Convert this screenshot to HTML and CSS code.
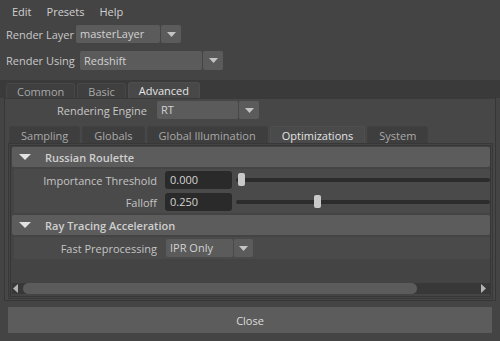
FILE: index.html
```html
<!DOCTYPE html>
<html>
<head>
<meta charset="utf-8">
<link rel="stylesheet" href="styles.css">
</head>
<body>
<div class="menubar">
  <span>Edit</span><span>Presets</span><span>Help</span>
</div>
<div class="toprow row1">
  <span class="toplabel lbl-layer">Render Layer</span>
  <div class="dropdown">
    <span class="dd-value dd-layer">masterLayer</span>
    <span class="dd-btn"><svg width="9" height="5" viewBox="0 0 9 5"><polygon points="0,0 9,0 4.5,5" fill="#c4c4c4"/></svg></span>
  </div>
</div>
<div class="toprow row2">
  <span class="toplabel lbl-using">Render Using</span>
  <div class="dropdown tall">
    <span class="dd-value dd-using">Redshift</span>
    <span class="dd-btn"><svg width="9" height="5" viewBox="0 0 9 5"><polygon points="0,0 9,0 4.5,5" fill="#c4c4c4"/></svg></span>
  </div>
</div>

<div class="tabstrip">
  <span class="tab">Common</span><span class="tab">Basic</span><span class="tab selected">Advanced</span>
</div>
<div class="panel">
  <div class="re-row">
    <span class="re-label">Rendering Engine</span>
    <div class="dropdown">
      <span class="dd-value dd-engine">RT</span>
      <span class="dd-btn"><svg width="9" height="5" viewBox="0 0 9 5"><polygon points="0,0 9,0 4.5,5" fill="#c4c4c4"/></svg></span>
    </div>
  </div>
  <div class="subtabs">
    <span class="subtab">Sampling</span><span class="subtab">Globals</span><span class="subtab">Global Illumination</span><span class="subtab selected">Optimizations</span><span class="subtab">System</span>
  </div>
  <div class="subpanel">
    <div class="scrollarea">
      <div class="frame-header first">
        <svg class="tri" width="12" height="6" viewBox="0 0 12 6"><polygon points="0,0 12,0 6,6" fill="#e2e2e2"/></svg>
        <span>Russian Roulette</span>
      </div>
      <div class="frame-body">
        <div class="attr-row">
          <span class="attr-label">Importance Threshold</span>
          <span class="field">0.000</span>
          <div class="slider"><div class="track"></div><div class="handle" style="left:2px"></div></div>
        </div>
        <div class="attr-row">
          <span class="attr-label">Falloff</span>
          <span class="field">0.250</span>
          <div class="slider"><div class="track"></div><div class="handle" style="left:78px"></div></div>
        </div>
      </div>
      <div class="frame-header">
        <svg class="tri" width="12" height="6" viewBox="0 0 12 6"><polygon points="0,0 12,0 6,6" fill="#e2e2e2"/></svg>
        <span>Ray Tracing Acceleration</span>
      </div>
      <div class="frame-body second">
        <div class="attr-row">
          <span class="attr-label">Fast Preprocessing</span>
          <div class="dropdown small">
            <span class="dd-value dd-ipr">IPR Only</span>
            <span class="dd-btn"><svg width="9" height="5" viewBox="0 0 9 5"><polygon points="0,0 9,0 4.5,5" fill="#c4c4c4"/></svg></span>
          </div>
        </div>
      </div>
      <div class="spacer"></div>
      <div class="hscroll">
        <svg class="arrow-l" width="5" height="9" viewBox="0 0 5 9"><polygon points="5,0 5,9 0,4.5" fill="#b4b4b4"/></svg>
        <div class="thumb"></div>
        <div class="hs-rest"></div>
        <svg class="arrow-r" width="5" height="9" viewBox="0 0 5 9"><polygon points="0,0 0,9 5,4.5" fill="#b4b4b4"/></svg>
      </div>
    </div>
  </div>
</div>
<div class="closebar">
  <button class="close">Close</button>
</div>
</body>
</html>
```

FILE: styles.css
```css
html, body {
  margin: 0;
  padding: 0;
}
body {
  width: 500px;
  height: 341px;
  overflow: hidden;
  background: #444444;
  font-family: "Open Sans", "DejaVu Sans", sans-serif;
  font-size: 11px;
  line-height: 15px;
  color: #c6c6c6;
}
.menubar {
  display: flex;
  gap: 15px;
  padding: 4px 0 0 12px;
  height: 15px;
  color: #d0d0d0;
}
.toprow {
  display: flex;
  align-items: center;
  padding-left: 6px;
}
.row1 { margin-top: 6px; height: 18px; }
.row2 { margin-top: 8px; height: 19px; }
.toplabel { color: #c8c8c8; }
.lbl-layer { width: 70px; }
.lbl-using { width: 74px; }

.dropdown {
  display: flex;
  gap: 1px;
  height: 18px;
}
.dropdown.tall { height: 19px; }
.dd-value {
  background: #5b5b5b;
  border-radius: 2px;
  padding-left: 4px;
  line-height: 18px;
  color: #d2d2d2;
  box-sizing: border-box;
}
.tall .dd-value { line-height: 19px; }
.dd-btn {
  width: 20px;
  background: #5b5b5b;
  border-radius: 2px;
  display: flex;
  align-items: center;
  justify-content: center;
}
.dd-layer { width: 84px; }
.dd-using { width: 122px; }
.dd-engine { width: 81px; }
.dd-ipr { width: 67px; }
.small .dd-btn { width: 19px; }

.tabstrip {
  margin-top: 10px;
  height: 15px;
  padding: 3px 0 0 6px;
  background: #3a3a3a;
  display: flex;
  gap: 2px;
}
.tab {
  height: 15px;
  padding: 0 10px;
  background: #3f3f3f;
  border: 1px solid #474747;
  border-bottom: none;
  border-radius: 3px 3px 0 0;
  box-sizing: border-box;
  line-height: 15px;
  color: #a9a9a9;
}
.tab.selected {
  background: #484848;
  border-color: #4e4e4e;
  color: #e6e6e6;
  height: 16px;
  margin-top: -1px;
}
.panel {
  margin: 0 4px;
  border: 1px solid #363636;
  border-top-color: #3a3a3a;
  background: #474747;
  height: 203px;
  box-sizing: border-box;
  display: flex;
  flex-direction: column;
}
.re-row {
  display: flex;
  align-items: center;
  margin-top: 2px;
  height: 18px;
}
.re-label {
  width: 142px;
  text-align: right;
  margin-right: 10px;
  color: #c8c8c8;
}
.subtabs {
  margin-top: 7px;
  height: 17px;
  padding-left: 4px;
  display: flex;
  gap: 2px;
}
.subtab {
  height: 17px;
  padding: 0 11px;
  background: #3e3e3e;
  border: 1px solid #404040;
  border-bottom: none;
  border-radius: 3px 3px 0 0;
  box-sizing: border-box;
  line-height: 17px;
  color: #a9a9a9;
}
.subtab.selected {
  background: #4a4a4a;
  border-color: #4f4f4f;
  color: #e4e4e4;
}
.subpanel {
  margin: 0 2px 1px 3px;
  height: 156px;
  border: 1px solid #383838;
  background: #444444;
  box-sizing: border-box;
  padding: 1px;
}
.scrollarea {
  height: 152px;
  border: 1px solid #363636;
  box-sizing: border-box;
  background: #444444;
  display: flex;
  flex-direction: column;
}
.frame-header {
  height: 20px;
  margin-left: 1px;
  background: #5c5c5c;
  border-radius: 2px;
  display: flex;
  align-items: center;
  font-weight: 600;
  color: #cfcfcf;
  flex: none;
}
.frame-header.first { margin-top: 1px; }
.tri { margin: 0 14px 0 7px; }
.frame-body {
  margin: 2px 0 2px 3px;
  background: #4a4a4a;
  flex: none;
}
.frame-body.second { margin-bottom: 0; }
.attr-row {
  display: flex;
  align-items: center;
  height: 22px;
}
.attr-label {
  width: 143px;
  text-align: right;
  margin-right: 8px;
  color: #c4c4c4;
}
.field {
  width: 67px;
  height: 18px;
  line-height: 18px;
  background: #2a2a2a;
  border-radius: 3px;
  padding-left: 5px;
  box-sizing: border-box;
  color: #d4d4d4;
}
.small { margin-left: 1px; }
.slider {
  position: relative;
  flex: 1;
  height: 18px;
  margin-left: 4px;
  display: flex;
  align-items: center;
}
.track {
  flex: 1;
  height: 4px;
  background: #2c2c2c;
  border-radius: 2px;
}
.handle {
  position: absolute;
  top: 2px;
  width: 7px;
  height: 13px;
  background: #c9c9c9;
  border-radius: 2px;
}
.spacer { flex: 1; }
.hscroll {
  margin: 0 0 2px 1px;
  height: 11px;
  background: #383838;
  display: flex;
  align-items: center;
  flex: none;
}
.arrow-l { margin: 0 5px 0 1px; }
.thumb {
  width: 394px;
  height: 11px;
  background: #5b5b5b;
  border-radius: 6px;
}
.hs-rest { flex: 1; }
.arrow-r { margin-right: 4px; }

.closebar {
  padding: 6px 8px 0 8px;
}
.close {
  display: block;
  width: 484px;
  height: 26px;
  border: none;
  border-radius: 1px;
  background: #5c5c5c;
  font-family: "Open Sans", "DejaVu Sans", sans-serif;
  font-size: 11px;
  color: #dcdcdc;
  padding: 0;
}
```
